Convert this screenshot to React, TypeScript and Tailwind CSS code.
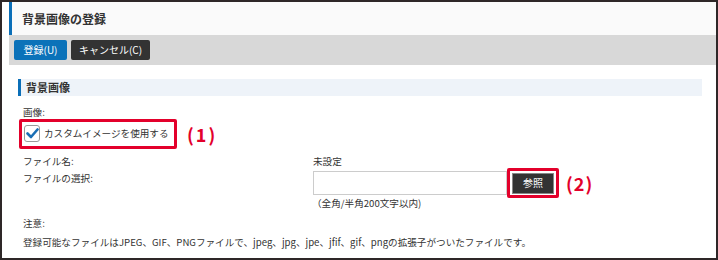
import React from "react";

const font = { fontFamily: '"Noto Sans CJK JP", "Noto Sans", sans-serif' };

export default function App() {
  return (
    <div
      className="w-[718px] h-[260px] border-2 border-[#2e2728] bg-white overflow-hidden text-[#333]"
      style={font}
    >
      <div className="pl-[7px]">
        {/* header */}
        <div className="h-[33px] bg-[#fafafa] border-l-[3px] border-[#0b6fb8] flex items-center pl-[10px]">
          <span className="text-[12px] font-bold text-[#333] leading-none">背景画像の登録</span>
        </div>
        {/* toolbar */}
        <div className="h-[30px] bg-[#d8d8d8] flex items-center gap-[4px] pl-[5px]">
          <button className="h-[20px] w-[53px] rounded-[2px] bg-[#0b72b9] text-white text-[10px] leading-none flex items-center justify-center">
            登録(U)
          </button>
          <button className="h-[20px] w-[79px] rounded-[2px] bg-[#333333] text-white text-[10px] leading-none flex items-center justify-center">
            キャンセル(C)
          </button>
        </div>
        {/* content */}
        <div className="pl-[9px] pr-[14px] pt-[14px]">
          <div className="h-[17px] bg-[#eef3f9] border-l-[3px] border-[#0b6fb8] flex items-center pl-[5px]">
            <span className="text-[11px] font-bold leading-none">背景画像</span>
          </div>
          <div className="pl-[5px] text-[9.6px] leading-none">
            <div className="mt-[12px]">画像:</div>
            <div className="flex items-center mt-[1px] -ml-[4px]">
              <div className="w-[158px] h-[30px] border-[3px] border-[#e3002b] rounded-[2px] flex items-center pl-[2px]">
                <span className="w-[16px] h-[17px] rounded-[3px] border border-[#9a9a9a] bg-white flex items-center justify-center">
                  <svg width="13" height="11" viewBox="0 0 13 11">
                    <path d="M1.5 5.5 L5 9 L11.5 1.5" fill="none" stroke="#1a6fb5" strokeWidth="2.6" strokeLinecap="round" strokeLinejoin="round" />
                  </svg>
                </span>
                <span className="ml-[4px]">カスタムイメージを使用する</span>
              </div>
              <span className="ml-[10px] text-[18px] font-bold text-[#e3002b] tracking-[2px]">(1)</span>
            </div>
            <div className="flex mt-[8px]">
              <div className="w-[290px]">ファイル名:</div>
              <div>未設定</div>
            </div>
            <div className="flex mt-[8px]">
              <div className="w-[290px]">ファイルの選択:</div>
              <div className="flex flex-col -mt-[6px]">
                <div className="flex items-center">
                  <div className="w-[194px] h-[24px] border border-[#cccccc] bg-white" />
                  <div className="w-[52px] h-[30px] border-[3px] border-[#e3002b] rounded-[2px] flex items-center justify-center">
                    <span className="w-[42px] h-[21px] bg-[#333333] border border-[#888] text-white text-[10px] flex items-center justify-center">参照</span>
                  </div>
                  <span className="ml-[7px] text-[18px] font-bold text-[#e3002b] tracking-[1px]">(2)</span>
                </div>
                <div className="mt-[1px] -ml-[1px]">（全角/半角200文字以内)</div>
              </div>
            </div>
            <div className="mt-[10px]">注意:</div>
            <div className="mt-[10px]">
              登録可能なファイルはJPEG、GIF、PNGファイルで、jpeg、jpg、jpe、jfif、gif、pngの拡張子がついたファイルです。
            </div>
          </div>
        </div>
      </div>
    </div>
  );
}
